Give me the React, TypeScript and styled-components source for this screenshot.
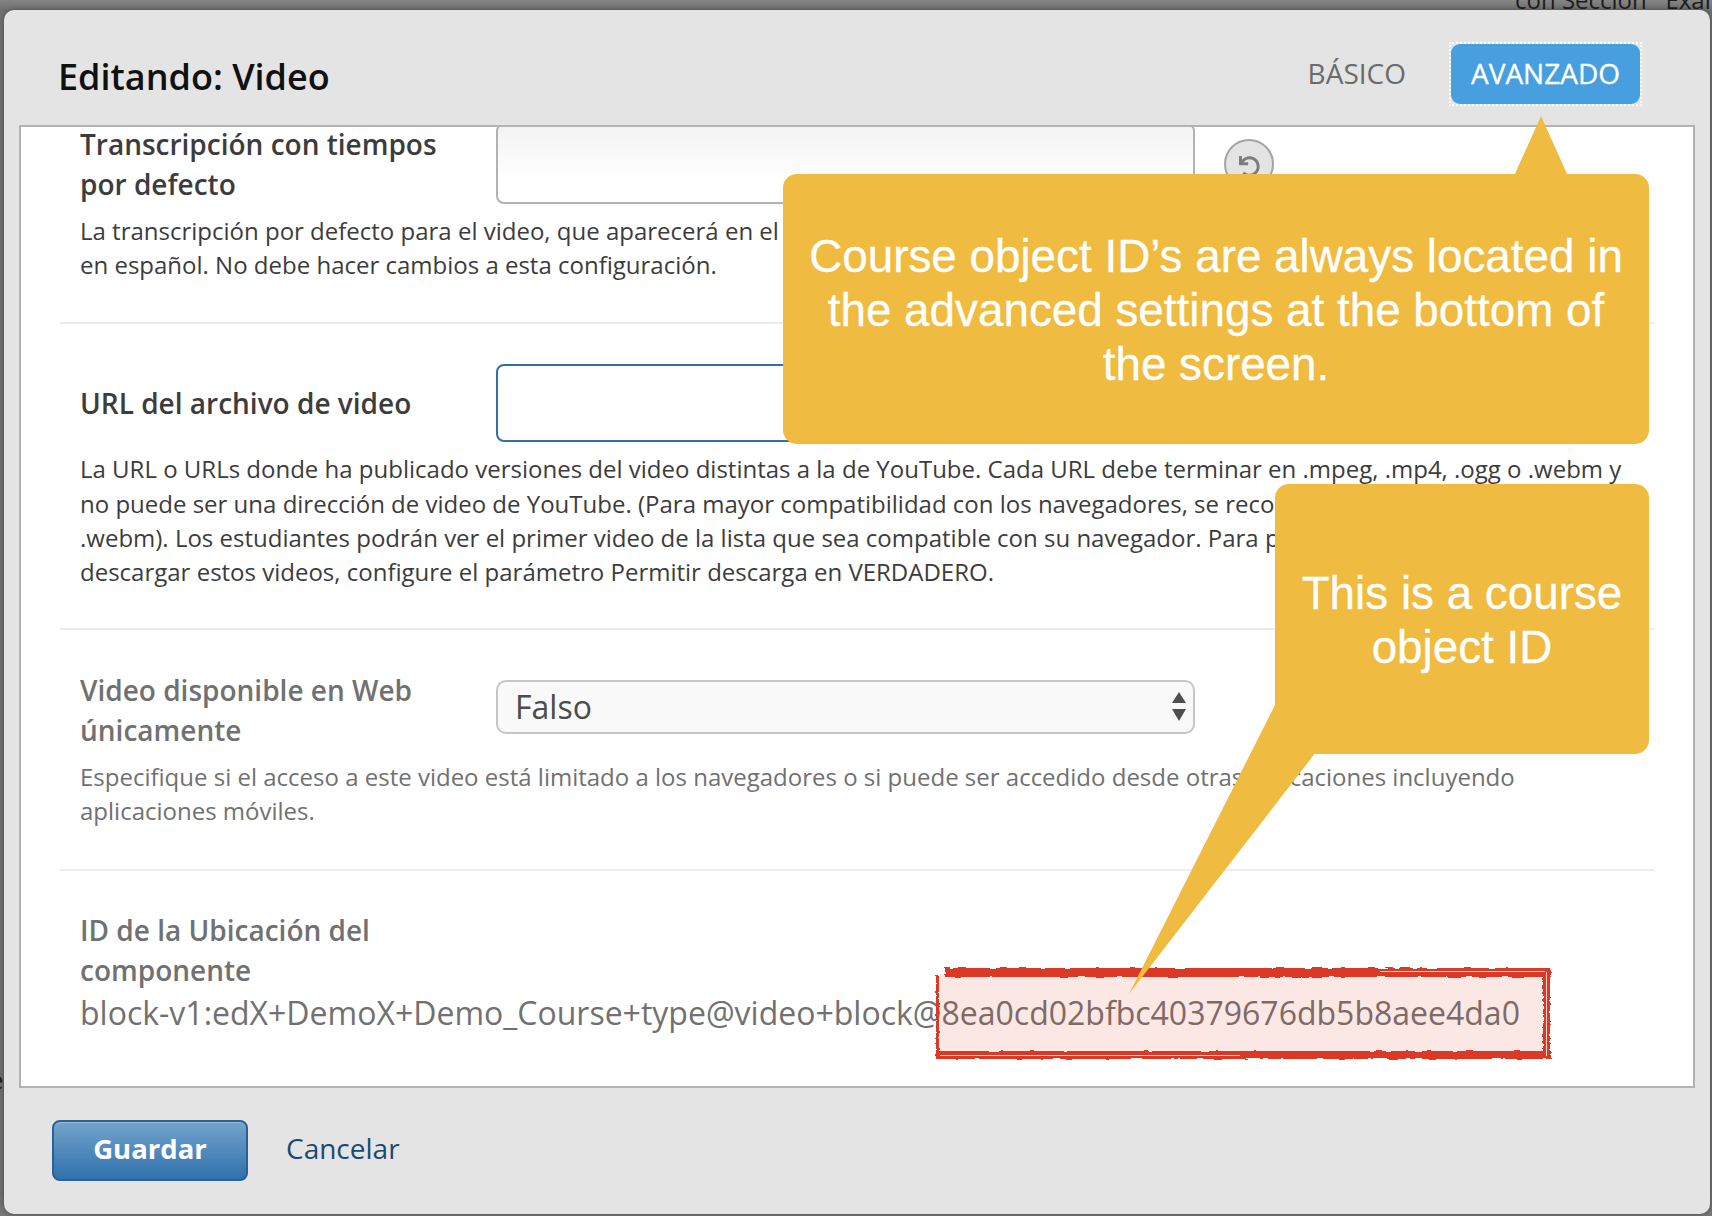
import styled, { createGlobalStyle } from 'styled-components';
import { FaUndo } from 'react-icons/fa';

const GlobalStyle = createGlobalStyle`
  html, body {
    margin: 0;
    padding: 0;
    background: #757575;
  }
  * {
    box-sizing: border-box;
  }
`;

const Page = styled.div`
  position: relative;
  width: 1712px;
  height: 1216px;
  padding: 10px 2px 2px 4px;
  overflow: hidden;
  background: linear-gradient(#858585, #6f6f6f 10px, #6f6f6f 98%, #777);
  font-family: 'Open Sans', sans-serif;
`;

const BackdropText = styled.span<{ $left: number; $top: number }>`
  position: absolute;
  left: ${p => p.$left}px;
  top: ${p => p.$top}px;
  font-size: 24px;
  line-height: 34px;
  color: #1d1d1d;
  white-space: pre;
`;

const Modal = styled.div`
  position: relative;
  display: flex;
  flex-direction: column;
  width: 1706px;
  height: 1204px;
  background: #e4e4e4;
  border-radius: 10px;
  box-shadow: 0 0 5px rgba(0, 0, 0, 0.35);
`;

const Header = styled.header`
  display: flex;
  align-items: center;
  justify-content: space-between;
  height: 115px;
  padding: 0 70px 0 54px;
`;

const Title = styled.h1`
  margin: 19px 0 0;
  font-size: 36px;
  font-weight: 600;
  line-height: 44px;
  color: #111;
`;

const Tabs = styled.nav`
  display: flex;
  align-items: center;
  gap: 45px;
  margin-top: 12px;
`;

const Tab = styled.span<{ $active?: boolean }>`
  position: relative;
  display: flex;
  align-items: center;
  justify-content: center;
  height: 60px;
  padding-bottom: 2px;
  font-size: 28px;
  color: ${p => (p.$active ? '#fff' : '#6b6b6b')};
  ${p =>
    p.$active &&
    `
    width: 189px;
    background: #479fe0;
    border-radius: 9px;
    -webkit-text-stroke: 0.3px #fff;

    &::after {
      content: '';
      position: absolute;
      inset: -2px;
      border: 2px dotted #fff;
    }
  `}
`;

const Content = styled.main`
  height: 963px;
  margin: 0 15px;
  padding: 0 39px;
  overflow: hidden;
  background: #fff;
  border: 2px solid #b2b2b2;
`;

const Setting = styled.section<{ $disabled?: boolean; $first?: boolean }>`
  padding: ${p => (p.$first ? '0' : '40px')} 20px 40px;
  margin-top: ${p => (p.$first ? '-4px' : '0')};
  border-bottom: 2px solid #ececec;
  color: ${p => (p.$disabled ? '#717171' : '#3c3c3c')};

  &:nth-child(2) {
    padding-bottom: 39px;
  }

  &:last-child {
    padding-top: 39px;
    border-bottom: none;
  }
`;

const Field = styled.div`
  display: flex;
  align-items: center;
`;

const Label = styled.label`
  display: block;
  flex: none;
  width: 416px;
  padding-right: 30px;
  font-size: 28px;
  font-weight: 600;
  line-height: 40px;
`;

const TextBox = styled.div<{ $focused?: boolean }>`
  flex: none;
  width: 699px;
  height: ${p => (p.$focused ? '78px' : '81px')};
  background: ${p => (p.$focused ? '#fff' : 'linear-gradient(#f3f3f3, #fff 70%)')};
  border: 2px solid ${p => (p.$focused ? '#2f71ab' : '#b2b2b2')};
  border-radius: 8px;
`;

const ResetButton = styled.button`
  display: flex;
  align-items: center;
  justify-content: center;
  flex: none;
  width: 50px;
  height: 50px;
  margin-left: 29px;
  padding: 6px 0 0;
  color: #7d7d7d;
  font-size: 21px;
  background: #e4e4e4;
  border: 2px solid #a5a5a5;
  border-radius: 50%;
`;

const Select = styled.div`
  display: flex;
  align-items: center;
  justify-content: space-between;
  flex: none;
  align-self: flex-start;
  width: 699px;
  height: 54px;
  margin-top: 10px;
  padding: 0 7px 2px 17px;
  font-size: 32px;
  color: #4c4c4c;
  background: #f9f9f9;
  border: 2px solid #c6c6c6;
  border-radius: 10px;
`;

const Help = styled.p`
  margin: 10px 0 0;
  font-size: 24px;
  line-height: 34.2px;
  white-space: nowrap;
`;

const ReadOnlyValue = styled.div`
  margin-top: 1px;
  font-size: 32px;
  line-height: 44px;
  white-space: nowrap;
`;

const Footer = styled.footer`
  display: flex;
  align-items: center;
  gap: 38px;
  flex: 1;
  padding: 0 0 2px 48px;
`;

const SaveButton = styled.button`
  width: 196px;
  height: 61px;
  padding: 0 0 3px;
  font-family: inherit;
  font-size: 27.5px;
  font-weight: 700;
  color: #fff;
  background: linear-gradient(#74a3cb, #3071ad);
  border: 2px solid #2a6194;
  border-radius: 8px;
  box-shadow: inset 0 1px 0 rgba(255, 255, 255, 0.25);
`;

const CancelLink = styled.a`
  margin-bottom: 4px;
  font-size: 28px;
  color: #1b4a70;
`;

const Drawing = styled.svg`
  position: absolute;
  left: 0;
  top: 0;
  pointer-events: none;
`;

const Callout = styled.div<{ $left: number; $top: number; $width: number; $height: number }>`
  position: absolute;
  left: ${p => p.$left}px;
  top: ${p => p.$top}px;
  display: flex;
  align-items: center;
  justify-content: center;
  width: ${p => p.$width}px;
  height: ${p => p.$height}px;
  padding: 4px 16px 0;
  font-family: 'Liberation Sans', Arial, sans-serif;
  font-size: 45.8px;
  line-height: 54px;
  text-align: center;
  color: #fff;
  -webkit-text-stroke: 0.3px #fff;
  background: #efbb40;
  border-radius: 14px;
`;

export default function App() {
  return (
    <Page>
      <GlobalStyle />
      <BackdropText $left={1515} $top={-17}>con Sección   Exam</BackdropText>
      <BackdropText $left={-10} $top={1063}>e</BackdropText>
      <Modal>
        <Header>
          <Title>Editando: Video</Title>
          <Tabs>
            <Tab>BÁSICO</Tab>
            <Tab $active>AVANZADO</Tab>
          </Tabs>
        </Header>
        <Content>
          <Setting $first>
            <Field>
              <Label>Transcripción con tiempos por defecto</Label>
              <TextBox />
              <ResetButton>
                <FaUndo />
              </ResetButton>
            </Field>
            <Help>
              La transcripción por defecto para el video, que aparecerá en el campo Transcripción de la pestaña Básico. Esta debe estar
              <br />
              en español. No debe hacer cambios a esta configuración.
            </Help>
          </Setting>
          <Setting>
            <Field>
              <Label>URL del archivo de video</Label>
              <TextBox $focused />
            </Field>
            <Help>
              La URL o URLs donde ha publicado versiones del video distintas a la de YouTube. Cada URL debe terminar en .mpeg, .mp4, .ogg o .webm y
              <br />
              no puede ser una dirección de video de YouTube. (Para mayor compatibilidad con los navegadores, se recomienda usar .mpeg, .mp4 y
              <br />
              .webm). Los estudiantes podrán ver el primer video de la lista que sea compatible con su navegador. Para permitir
              <br />
              descargar estos videos, configure el parámetro Permitir descarga en VERDADERO.
            </Help>
          </Setting>
          <Setting $disabled>
            <Field>
              <Label>Video disponible en Web únicamente</Label>
              <Select>
                Falso
                <svg width="14" height="29" viewBox="0 0 14 29">
                  <path d="M7 0 L14 11 H0 Z M0 17 H14 L7 29 Z" fill="#4f4f4f" />
                </svg>
              </Select>
            </Field>
            <Help>
              Especifique si el acceso a este video está limitado a los navegadores o si puede ser accedido desde otras aplicaciones incluyendo
              <br />
              aplicaciones móviles.
            </Help>
          </Setting>
          <Setting $disabled>
            <Label>ID de la Ubicación del componente</Label>
            <ReadOnlyValue>block-v1:edX+DemoX+Demo_Course+type@video+block@8ea0cd02bfbc40379676db5b8aee4da0</ReadOnlyValue>
          </Setting>
        </Content>
        <Footer>
          <SaveButton>Guardar</SaveButton>
          <CancelLink>Cancelar</CancelLink>
        </Footer>
      </Modal>

      <Drawing width="1712" height="1216" viewBox="0 0 1712 1216">
        <defs>
          <filter id="rough" x="-5%" y="-20%" width="110%" height="140%">
            <feTurbulence type="fractalNoise" baseFrequency="0.08 0.35" numOctaves="2" seed="4" />
            <feDisplacementMap in="SourceGraphic" scale="4" />
          </filter>
        </defs>
        <rect x="939" y="974" width="604" height="78" fill="#dc3825" fillOpacity="0.12" />
        <g fill="#dc3825" filter="url(#rough)">
          <rect x="945" y="968" width="606" height="9" />
          <rect x="1543" y="968" width="7" height="91" />
          <rect x="936" y="1051" width="615" height="8" />
          <rect x="936" y="976" width="3" height="80" />
        </g>
        <g fill="#fff" fillOpacity="0.8">
          <rect x="1546" y="972" width="1" height="84" />
          <rect x="1380" y="971" width="165" height="1" />
          <rect x="940" y="1055" width="300" height="1" />
        </g>
        <path d="M1541 116 L1514 176 H1568 Z" fill="#efbb40" />
        <path d="M1276 703 L1129 994 L1316 752 Z" fill="#efbb40" />
      </Drawing>

      <Callout $left={783} $top={174} $width={866} $height={270}>
        Course object ID’s are always located in the advanced settings at the bottom of the screen.
      </Callout>
      <Callout $left={1275} $top={484} $width={374} $height={270}>
        This is a course object ID
      </Callout>
    </Page>
  );
}
